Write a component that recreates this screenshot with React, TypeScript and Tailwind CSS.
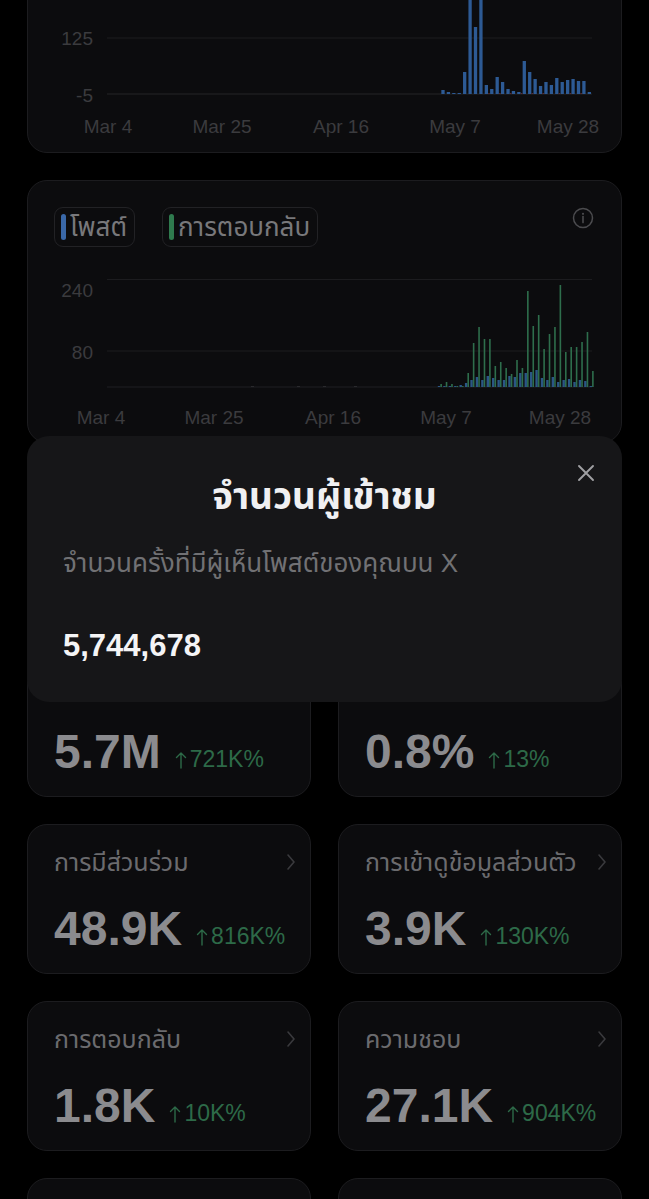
import React from 'react';

const AXIS = '#3b3b3e';
const GRID = '#1c1c1f';
const FONT = "'Liberation Sans', 'Noto Sans Thai', 'Noto Sans', sans-serif";

const SLOT = 5.42;
const X0 = 79;

// chart 1: post bar heights (px) by day index
const impressions: Record<number, number> = {
  62: 4, 63: 2, 64: 1, 65: 1, 66: 22, 67: 140, 68: 67, 69: 140, 70: 9, 71: 5, 72: 17, 73: 12, 74: 5,
  75: 3, 76: 2, 77: 33, 78: 22, 79: 15, 80: 8, 81: 12, 82: 9, 83: 16, 84: 12, 85: 14, 86: 15, 87: 13,
  88: 13, 89: 2,
};

const replies: Record<number, number> = {
  61: 3, 62: 5, 63: 3, 64: 1, 65: 1, 66: 14, 67: 44, 68: 60, 69: 48, 70: 48, 71: 21, 72: 25, 73: 19,
  74: 13, 75: 27, 76: 19, 77: 96, 78: 61, 79: 72, 80: 38, 81: 53, 82: 60, 83: 102, 84: 35, 85: 40,
  86: 40, 87: 45, 88: 55, 89: 16,
};

const posts: Record<number, number> = {
  61: 1, 62: 1, 63: 1, 64: 1, 65: 2, 66: 4, 67: 7, 68: 10, 69: 7, 70: 11, 71: 9, 72: 7, 73: 7, 74: 11,
  75: 10, 76: 14, 77: 14, 78: 15, 79: 17, 80: 9, 81: 7, 82: 10, 83: 5, 84: 7, 85: 8, 86: 5, 87: 7,
  88: 6, 89: 1,
};

function AxisText({ x, y, anchor, children }: { x: number; y: number; anchor: 'end' | 'middle'; children: string }) {
  return (
    <text x={x} y={y} textAnchor={anchor} fill={AXIS} fontSize={19} fontFamily={FONT}>
      {children}
    </text>
  );
}

function ImpressionsChart() {
  const base = 134;
  return (
    <svg className="block mt-[70px]" width={593} height={190}>
      <line x1={X0} x2={564} y1={22} y2={22} stroke={GRID} />
      <line x1={X0} x2={564} y1={78} y2={78} stroke={GRID} />
      <line x1={X0} x2={564} y1={base} y2={base} stroke="#242427" />
      <AxisText x={65} y={85} anchor="end">125</AxisText>
      <AxisText x={65} y={142} anchor="end">-5</AxisText>
      {Object.entries(impressions).map(([i, h]) => (
        <rect key={i} x={X0 + Number(i) * SLOT - 1.7} y={base - h} width={3.3} height={h} fill="#2d5a94" />
      ))}
      {[70, 72, 74, 76, 78, 80, 83, 85, 87].map((i) => (
        <rect key={'r' + i} x={X0 + i * SLOT + 1.8} y={base - 1} width={1.6} height={1} fill="#5b2b2e" />
      ))}
      <AxisText x={80} y={173} anchor="middle">Mar 4</AxisText>
      <AxisText x={194} y={173} anchor="middle">Mar 25</AxisText>
      <AxisText x={313} y={173} anchor="middle">Apr 16</AxisText>
      <AxisText x={427} y={173} anchor="middle">May 7</AxisText>
      <AxisText x={540} y={173} anchor="middle">May 28</AxisText>
    </svg>
  );
}

function RepliesChart() {
  const base = 127;
  return (
    <svg className="block mt-[13px]" width={593} height={170}>
      <line x1={X0} x2={564} y1={19.5} y2={19.5} stroke={GRID} />
      <line x1={X0} x2={564} y1={91} y2={91} stroke={GRID} />
      <line x1={X0} x2={564} y1={base} y2={base} stroke="#1f1f22" />
      <AxisText x={65} y={37} anchor="end">240</AxisText>
      <AxisText x={65} y={99} anchor="end">80</AxisText>
      {[223, 269, 295, 326].map((x) => (
        <rect key={'d' + x} x={x} y={base - 1} width={3} height={1} fill="#2a2a2d" />
      ))}
      {Object.entries(posts).map(([i, h]) => (
        <rect key={'p' + i} x={X0 + Number(i) * SLOT + 0.2} y={base - h} width={2.4} height={h} fill="#2b5685" />
      ))}
      {Object.entries(replies).map(([i, h]) => (
        <rect key={'g' + i} x={X0 + Number(i) * SLOT + 2.7} y={base - h} width={1.6} height={h} fill="#2e6e4c" />
      ))}
      <AxisText x={73} y={164} anchor="middle">Mar 4</AxisText>
      <AxisText x={186} y={164} anchor="middle">Mar 25</AxisText>
      <AxisText x={305} y={164} anchor="middle">Apr 16</AxisText>
      <AxisText x={418} y={164} anchor="middle">May 7</AxisText>
      <AxisText x={532} y={164} anchor="middle">May 28</AxisText>
    </svg>
  );
}

function LegendChip({ color, label }: { color: string; label: string }) {
  return (
    <div className="flex items-center h-[40px] rounded-[9px] border border-[#222225] pl-[6px] pr-[7px] gap-[4px]">
      <span className={`w-[5px] h-[26px] rounded-full ${color}`} />
      <span className="text-[26px] leading-none text-[#78787b]">{label}</span>
    </div>
  );
}

function InfoIcon() {
  return (
    <svg width={22} height={22} viewBox="0 0 22 22" fill="none">
      <circle cx={11} cy={11} r={9.5} stroke="#4b4b4e" strokeWidth={1.5} />
      <circle cx={11} cy={6.8} r={1.1} fill="#4b4b4e" />
      <path d="M11 9.6v6" stroke="#4b4b4e" strokeWidth={1.6} strokeLinecap="round" />
    </svg>
  );
}

function Chevron() {
  return (
    <svg width={10} height={18} viewBox="0 0 10 18" fill="none">
      <path d="M2 2l6 7-6 7" stroke="#3a3a3d" strokeWidth={1.6} strokeLinecap="round" strokeLinejoin="round" />
    </svg>
  );
}

function UpArrow() {
  return (
    <svg width={12} height={18} viewBox="0 0 12 18" fill="none" className="mr-[3px]">
      <path d="M6 17V2M1.5 6.5 6 2l4.5 4.5" stroke="#2d6a48" strokeWidth={1.4} strokeLinecap="round" strokeLinejoin="round" />
    </svg>
  );
}

interface StatCardProps {
  title: string;
  value: string;
  change: string;
}

function StatCard({ title, value, change }: StatCardProps) {
  return (
    <div className="h-[150px] rounded-[20px] border border-[#1c1c1f] bg-[#0c0c0e] pl-[26px] pr-[14px] pt-[21px]">
      <div className="flex items-center justify-between h-[32px]">
        <span className="text-[25px] leading-none text-[#6b6b6e] whitespace-nowrap">{title}</span>
        <Chevron />
      </div>
      <div className="mt-[27px] flex items-end">
        <span className="text-[48px] font-bold leading-none text-[#8b8b8e]">{value}</span>
        <span className="ml-[14px] mb-[5px] flex items-center">
          <UpArrow />
          <span className="text-[23px] leading-none text-[#2d6a48]">{change}</span>
        </span>
      </div>
    </div>
  );
}

function CloseIcon() {
  return (
    <svg width={18} height={18} viewBox="0 0 18 18" fill="none">
      <path d="M2 2l14 14M16 2L2 16" stroke="#a0a0a3" strokeWidth={1.9} strokeLinecap="round" />
    </svg>
  );
}

export default function App() {
  return (
    <div className="relative w-[649px] h-[1199px] overflow-hidden bg-black" style={{ fontFamily: FONT }}>
      <div className="-mt-[111px] px-[27px] flex flex-col gap-[27px]">
        {/* Impressions chart (scrolled partly off screen) */}
        <div className="h-[264px] rounded-[20px] border border-[#1c1c1f] bg-[#0c0c0e] overflow-hidden">
          <ImpressionsChart />
        </div>

        {/* Posts vs replies chart */}
        <div className="h-[263px] rounded-[20px] border border-[#1c1c1f] bg-[#0c0c0e] overflow-hidden">
          <div className="flex items-start justify-between pl-[26px] pr-[27px] pt-[26px]">
            <div className="flex items-center gap-[27px]">
              <LegendChip color="bg-[#3a68a8]" label="โพสต์" />
              <LegendChip color="bg-[#2f7a4e]" label="การตอบกลับ" />
            </div>
            <InfoIcon />
          </div>
          <RepliesChart />
        </div>

        <div className="grid grid-cols-2 gap-[27px]">
          <StatCard title="โพสต์" value="1.2K" change="4K%" />
          <StatCard title="การโพสต์ซ้ำ" value="5.3K" change="98K%" />
          <StatCard title="การแสดงผล" value="5.7M" change="721K%" />
          <StatCard title="อัตราการมีส่วนร่วม" value="0.8%" change="13%" />
          <StatCard title="การมีส่วนร่วม" value="48.9K" change="816K%" />
          <StatCard title="การเข้าดูข้อมูลส่วนตัว" value="3.9K" change="130K%" />
          <StatCard title="การตอบกลับ" value="1.8K" change="10K%" />
          <StatCard title="ความชอบ" value="27.1K" change="904K%" />
          <StatCard title="การบุ๊กมาร์ก" value="2.4K" change="320K%" />
          <StatCard title="การแชร์" value="310" change="12K%" />
        </div>
      </div>

      {/* Info sheet over the cards */}
      <div className="absolute left-[27px] top-[436px] w-[595px] h-[266px] rounded-[22px] bg-[#161618]">
        <button className="absolute right-[27px] top-[28px]">
          <CloseIcon />
        </button>
        <h2 className="pt-[38px] text-center text-[37px] font-bold leading-[46px] text-[#f0f0f2]">จำนวนผู้เข้าชม</h2>
        <p className="mt-[27px] px-[36px] text-[26px] leading-[32px] text-[#717174]">
          จำนวนครั้งที่มีผู้เห็นโพสต์ของคุณบน X
        </p>
        <p className="mt-[51px] px-[36px] text-[31px] font-bold leading-none text-[#f4f4f5]">5,744,678</p>
      </div>
    </div>
  );
}
